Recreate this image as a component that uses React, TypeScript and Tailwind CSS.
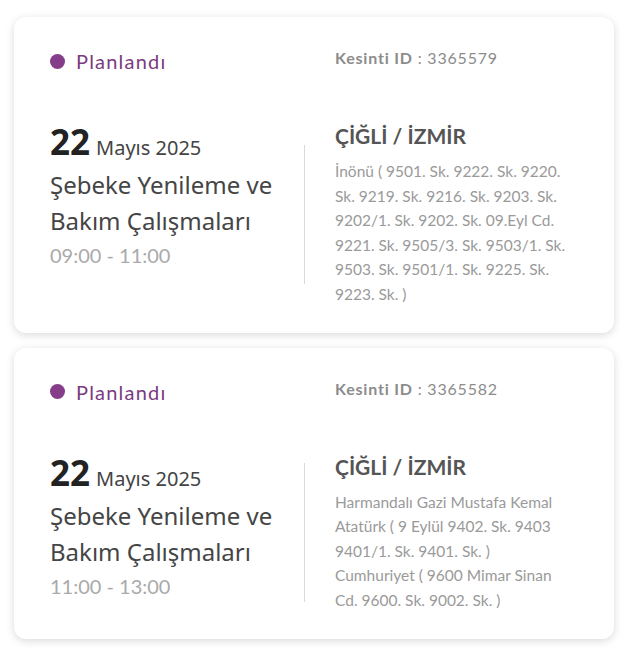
import React from 'react'

type Kesinti = {
  id: string
  time: string
  lines: string[]
}

const items: Kesinti[] = [
  {
    id: '3365579',
    time: '09:00 - 11:00',
    lines: [
      'İnönü ( 9501. Sk. 9222. Sk. 9220.',
      'Sk. 9219. Sk. 9216. Sk. 9203. Sk.',
      '9202/1. Sk. 9202. Sk. 09.Eyl Cd.',
      '9221. Sk. 9505/3. Sk. 9503/1. Sk.',
      '9503. Sk. 9501/1. Sk. 9225. Sk.',
      '9223. Sk. )',
    ],
  },
  {
    id: '3365582',
    time: '11:00 - 13:00',
    lines: [
      'Harmandalı Gazi Mustafa Kemal',
      'Atatürk ( 9 Eylül 9402. Sk. 9403',
      '9401/1. Sk. 9401. Sk. )',
      'Cumhuriyet ( 9600 Mimar Sinan',
      'Cd. 9600. Sk. 9002. Sk. )',
    ],
  },
]

const geo = "font-['Lato',sans-serif]"
const hum = "font-['Noto_Sans',sans-serif]"

function Card({ k }: { k: Kesinti }) {
  return (
    <div className="w-[600px] rounded-xl bg-white pl-[36px] pt-[30px] pb-[26px] shadow-[0_2px_8px_rgba(0,0,0,0.15)]">
      <div className="flex items-start">
        <div className="flex w-[285px] items-center gap-[11px]">
          <span className="h-[15px] w-[15px] rounded-full bg-[#853d89]" />
          <span className={`${geo} text-[20px] leading-[28px] tracking-[1.2px] text-[#7b3b80]`}>Planlandı</span>
        </div>
        <div className={`${geo} text-[16px] leading-[22px] tracking-[0.8px] text-[#8c8c8c]`}>
          <span className="font-bold">Kesinti ID</span> : {k.id}
        </div>
      </div>

      <div className="mt-[47px] flex items-start">
        <div className="w-[254px]">
          <div className={`${hum} flex items-baseline gap-[6px] leading-[40px]`}>
            <span className="text-[35px] font-bold text-[#222]">22</span>
            <span className="text-[20px] text-[#444]">Mayıs 2025</span>
          </div>
          <div className={`${hum} -mt-px text-[24px] leading-[36px] text-[#454545]`}>
            Şebeke Yenileme ve
            <br />
            Bakım Çalışmaları
          </div>
          <div className={`${geo} mt-[2px] text-[20px] leading-[28px] text-[#aaaaaa]`}>{k.time}</div>
        </div>

        <div className="h-[139px] w-px self-center bg-[#d9d9d9]" />

        <div className="ml-[30px]">
          <div className={`${geo} text-[21px] font-bold leading-[28px] text-[#555]`}>ÇİĞLİ / İZMİR</div>
          <div className={`${geo} mt-[9px] text-[15.5px] leading-[24.6px] text-[#9a9a9a]`}>
            {k.lines.map(l => (
              <div key={l} className="whitespace-nowrap">{l}</div>
            ))}
          </div>
        </div>
      </div>
    </div>
  )
}

export default function App() {
  return (
    <div className="flex min-h-screen flex-col gap-[15px] bg-white pl-[14px] pt-[17px]">
      {items.map(k => (
        <Card key={k.id} k={k} />
      ))}
    </div>
  )
}
